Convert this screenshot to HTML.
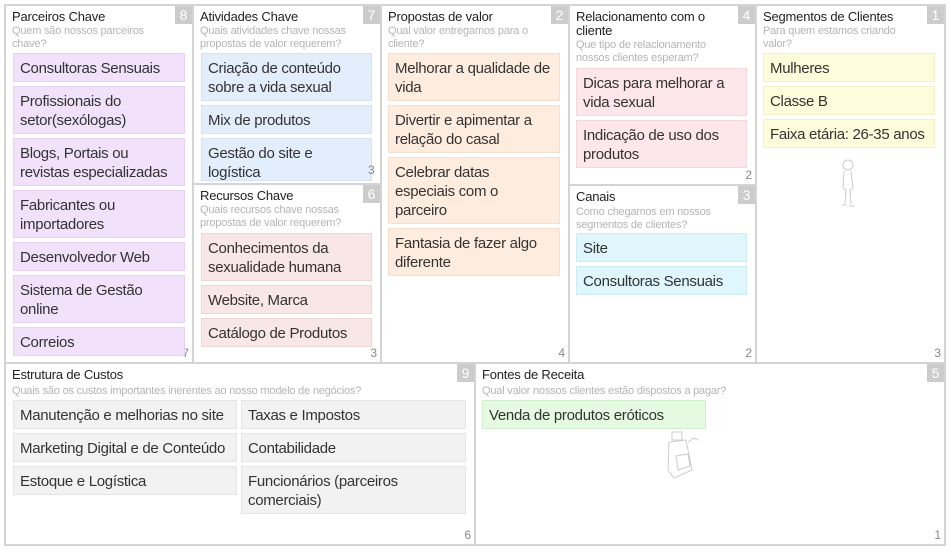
<!DOCTYPE html>
<html><head><meta charset="utf-8"><style>
*{box-sizing:border-box;margin:0;padding:0}
body{width:950px;height:549px;background:#fff;position:relative;overflow:hidden;font-family:"Liberation Sans",Arial,sans-serif;color:#333}
.p{position:absolute;border:2px solid #d4d4d4;background:#fff;overflow:hidden}
.t{position:absolute;left:6px;top:4px;font-size:13px;line-height:14px;color:#222;width:150px;letter-spacing:-0.2px}
.s{position:absolute;left:6px;font-size:11px;line-height:13px;color:#b4b4b4;white-space:nowrap;letter-spacing:-0.2px}
.b{position:absolute;right:0;top:0;width:17px;height:18px;background:#ccc;color:#fff;font-size:14px;line-height:18px;text-align:center}
.n{position:absolute;right:3px;bottom:2px;font-size:12px;color:#888}
.c{position:absolute;font-size:15px;line-height:19px;padding:5px 6px 4px;border:1px solid;color:#333;letter-spacing:-0.3px}
.nw{white-space:nowrap}
.pu{background:#f1e1fb;border-color:#e6d2f3}
.bl{background:#e3eefd;border-color:#d5e2f3}
.or{background:#feeddf;border-color:#f5e0cf}
.pk{background:#fde6ec;border-color:#f4d6de}
.rs{background:#f9e6e6;border-color:#efd6d6}
.cy{background:#dff6fd;border-color:#cdebf4}
.ye{background:#fefddb;border-color:#f3f1cb}
.gr{background:#f2f2f2;border-color:#e4e4e4}
.gn{background:#e4fbe2;border-color:#d2efd0}
</style></head><body>
<div class="p" style="left:4px;top:4px;width:190px;height:360px"><div class="t">Parceiros Chave</div><div class="s" style="top:19px">Quem são nossos parceiros<br>chave?</div><div class="b">8</div><div class="n">7</div></div>
<div class="p" style="left:192px;top:4px;width:190px;height:181px"><div class="t">Atividades Chave</div><div class="s" style="top:19px">Quais atividades chave nossas<br>propostas de valor requerem?</div><div class="b">7</div></div>
<div class="p" style="left:192px;top:183px;width:190px;height:181px"><div class="t">Recursos Chave</div><div class="s" style="top:19px">Quais recursos chave nossas<br>propostas de valor requerem?</div><div class="b">6</div><div class="n">3</div></div>
<div class="p" style="left:380px;top:4px;width:190px;height:360px"><div class="t">Propostas de valor</div><div class="s" style="top:19px">Qual valor entregamos para o<br>cliente?</div><div class="b">2</div><div class="n">4</div></div>
<div class="p" style="left:568px;top:4px;width:189px;height:182px"><div class="t">Relacionamento com o cliente</div><div class="s" style="top:33px">Que tipo de relacionamento<br>nossos clientes esperam?</div><div class="b">4</div><div class="n">2</div></div>
<div class="p" style="left:568px;top:184px;width:189px;height:180px"><div class="t">Canais</div><div class="s" style="top:20px">Como chegamos em nossos<br>segmentos de clientes?</div><div class="b">3</div><div class="n">2</div></div>
<div class="p" style="left:755px;top:4px;width:191px;height:360px"><div class="t">Segmentos de Clientes</div><div class="s" style="top:19px">Para quem estamos criando<br>valor?</div><div class="b">1</div><div class="n">3</div></div>
<div class="p" style="left:4px;top:362px;width:472px;height:184px"><div class="t" style="width:400px">Estrutura de Custos</div><div class="s" style="top:21px">Quais são os custos importantes inerentes ao nosso modelo de negócios?</div><div class="b">9</div><div class="n">6</div></div>
<div class="p" style="left:474px;top:362px;width:472px;height:184px"><div class="t">Fontes de Receita</div><div class="s" style="top:21px">Qual valor nossos clientes estão dispostos a pagar?</div><div class="b">5</div><div class="n">1</div></div>

<div class="c pu nw" style="left:13px;top:53px;width:172px;height:29px">Consultoras Sensuais</div>
<div class="c pu" style="left:13px;top:86px;width:172px;height:48px">Profissionais do<br>setor(sexólogas)</div>
<div class="c pu" style="left:13px;top:138px;width:172px;height:48px">Blogs, Portais ou<br>revistas especializadas</div>
<div class="c pu" style="left:13px;top:190px;width:172px;height:48px">Fabricantes ou<br>importadores</div>
<div class="c pu nw" style="left:13px;top:242px;width:172px;height:29px">Desenvolvedor Web</div>
<div class="c pu" style="left:13px;top:275px;width:172px;height:48px">Sistema de Gestão<br>online</div>
<div class="c pu nw" style="left:13px;top:327px;width:172px;height:29px">Correios</div>

<div class="c bl" style="left:201px;top:53px;width:171px;height:48px">Criação de conteúdo<br>sobre a vida sexual</div>
<div class="c bl nw" style="left:201px;top:105px;width:171px;height:29px">Mix de produtos</div>
<div class="c bl" style="left:201px;top:138px;width:171px;height:43px;overflow:hidden">Gestão do site e<br>logística</div>
<div style="position:absolute;left:368px;top:163px;font-size:12px;color:#888">3</div>

<div class="c rs" style="left:201px;top:233px;width:171px;height:48px">Conhecimentos da<br>sexualidade humana</div>
<div class="c rs nw" style="left:201px;top:285px;width:171px;height:29px">Website, Marca</div>
<div class="c rs nw" style="left:201px;top:318px;width:171px;height:29px">Catálogo de Produtos</div>

<div class="c or" style="left:388px;top:53px;width:172px;height:48px">Melhorar a qualidade de<br>vida</div>
<div class="c or" style="left:388px;top:105px;width:172px;height:48px">Divertir e apimentar a<br>relação do casal</div>
<div class="c or" style="left:388px;top:157px;width:172px;height:67px">Celebrar datas<br>especiais com o<br>parceiro</div>
<div class="c or" style="left:388px;top:228px;width:172px;height:48px">Fantasia de fazer algo<br>diferente</div>

<div class="c pk" style="left:576px;top:68px;width:171px;height:48px">Dicas para melhorar a<br>vida sexual</div>
<div class="c pk" style="left:576px;top:120px;width:171px;height:48px">Indicação de uso dos<br>produtos</div>

<div class="c cy nw" style="left:576px;top:233px;width:171px;height:29px">Site</div>
<div class="c cy nw" style="left:576px;top:266px;width:171px;height:29px">Consultoras Sensuais</div>

<div class="c ye nw" style="left:763px;top:53px;width:172px;height:29px">Mulheres</div>
<div class="c ye nw" style="left:763px;top:86px;width:172px;height:29px">Classe B</div>
<div class="c ye nw" style="left:763px;top:119px;width:172px;height:29px">Faixa etária: 26-35 anos</div>
<svg style="position:absolute;left:836px;top:158px" width="24" height="52" viewBox="0 0 24 52" fill="none" stroke="#ccc" stroke-width="1"><circle cx="12" cy="7" r="5"/><path d="M8 13 L7 30 L10 32 L9 46 M15 13 L17 30 L14 32 L15 46 M6 47 L11 47 M13 48 L19 48"/></svg>

<div class="c gr nw" style="left:13px;top:400px;width:224px;height:29px">Manutenção e melhorias no site</div>
<div class="c gr nw" style="left:13px;top:433px;width:224px;height:29px">Marketing Digital e de Conteúdo</div>
<div class="c gr nw" style="left:13px;top:466px;width:224px;height:29px">Estoque e Logística</div>
<div class="c gr nw" style="left:241px;top:400px;width:225px;height:29px">Taxas e Impostos</div>
<div class="c gr nw" style="left:241px;top:433px;width:225px;height:29px">Contabilidade</div>
<div class="c gr" style="left:241px;top:466px;width:225px;height:48px">Funcionários (parceiros<br>comerciais)</div>

<div class="c gn nw" style="left:482px;top:400px;width:224px;height:29px">Venda de produtos eróticos</div>
<svg style="position:absolute;left:664px;top:430px" width="40" height="50" viewBox="0 0 40 50" fill="none" stroke="#ccc" stroke-width="1"><rect x="8" y="2" width="10" height="8"/><path d="M5 12 L22 10 L28 40 L10 48 L4 40 Z M12 26 L24 24 L26 36 L14 40 Z M24 12 L30 8 L34 10"/></svg>
</body></html>
